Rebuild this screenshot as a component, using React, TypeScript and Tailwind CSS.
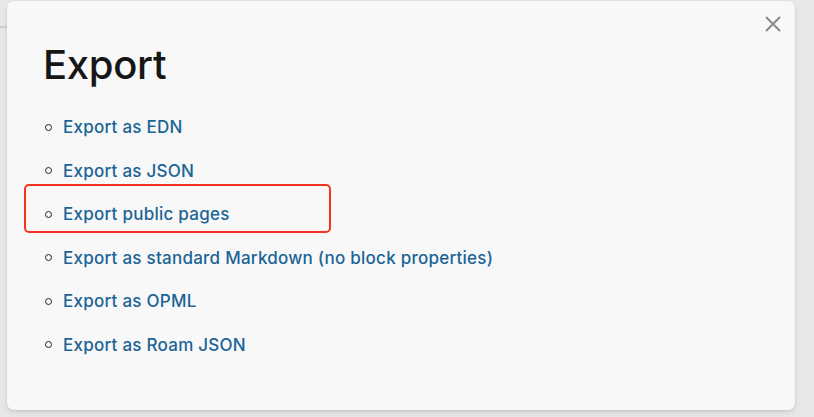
import React from "react";

const items = [
  "Export as EDN",
  "Export as JSON",
  "Export public pages",
  "Export as standard Markdown (no block properties)",
  "Export as OPML",
  "Export as Roam JSON",
];

export default function App() {
  return (
    <div
      className="relative w-[814px] h-[417px] overflow-hidden bg-[#e8e8e8] flex pl-[7px] pt-[1px]"
      style={{ fontFamily: "Inter, 'Noto Sans', sans-serif" }}
    >
      <div className="absolute left-0 top-[26px] w-[7px] h-[2px] bg-[#cfcfcf]" />
      <div className="relative w-[788px] h-[409px] bg-[#f8f8f8] rounded-[7px] shadow-[0_1px_3px_rgba(0,0,0,0.12),0_4px_10px_rgba(0,0,0,0.05)] pl-[36px] pt-[43.5px]">
        <button className="absolute right-[12px] top-[13px] w-[20px] h-[20px] flex items-center justify-center text-[#8a8a8a]">
          <svg width="18" height="18" viewBox="0 0 18 18" fill="none" stroke="currentColor" strokeWidth="2" strokeLinecap="butt">
            <path d="M2 2 L16 16 M16 2 L2 16" />
          </svg>
        </button>
        <h1 className="text-[40px] leading-none font-medium text-[#161616] tracking-[-0.3px]">Export</h1>
        <ul className="mt-[30.5px] flex flex-col gap-[19.6px]">
          {items.map((t) => (
            <li key={t} className="flex items-center h-[24px]">
              <span className="w-[7px] h-[7px] rounded-full border-[1.3px] border-[#222] ml-[2px] mr-[11px]" />
              <span className="text-[17px] leading-[24px] font-medium text-[#1b6496] tracking-[0.25px]">{t}</span>
            </li>
          ))}
        </ul>
      </div>
      <div className="absolute left-[24px] top-[184px] w-[307px] h-[49px] border-2 border-[#f5331f] rounded-[5px]" />
    </div>
  );
}
